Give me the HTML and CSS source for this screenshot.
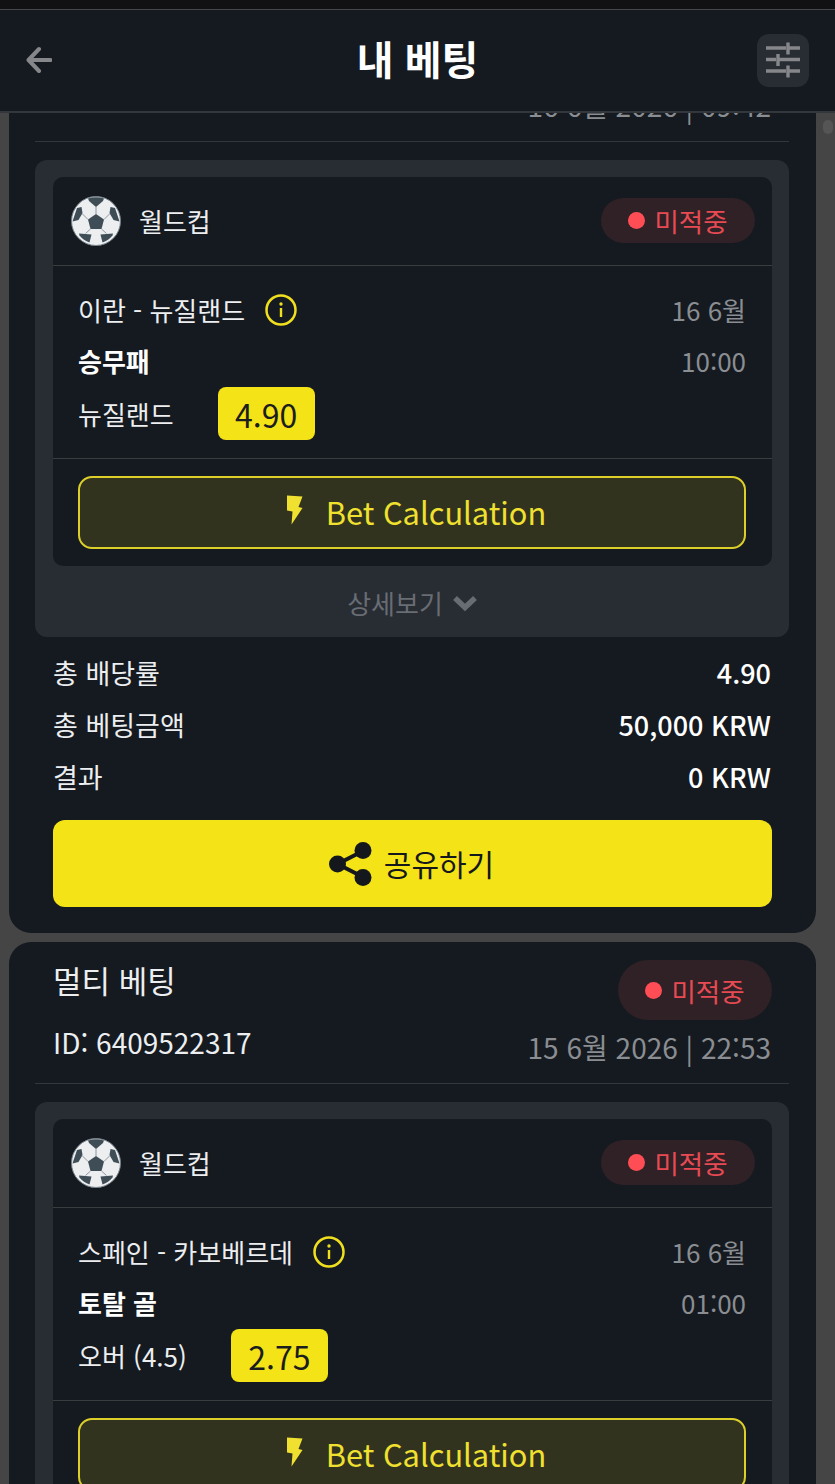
FILE: index.html
```html
<!DOCTYPE html>
<html lang="ko">
<head>
    <meta charset="UTF-8">
    <meta name="viewport" content="width=device-width, initial-scale=1.0">
    <title>내 베팅</title>
    <link rel="stylesheet" href="styles.css">
</head>
<body>
    <svg class="svg-defs" width="0" height="0" aria-hidden="true">
        <symbol id="ball" viewBox="0 0 50 50">
            <circle cx="25" cy="25" r="24.5" fill="#eceef0" stroke="#77828a" stroke-width="1"/>
            <g fill="#3f4d57">
                <path d="M25 18l8 5.500-2.500 9.500h-11l-2.500-9.500z"/>
                <path d="M17 2.500q8-2.500 16 0l-1 2.500-7 6-7-6z"/>
                <path d="M6 12l-4.500 13.500 6-1.500 4-7-1-6z"/>
                <path d="M44 12l4.500 13.500-6-1.500-4-7 1-6z"/>
                <path d="M8 37.500l12.500 1 -2 8q-6-2-10-7z"/>
                <path d="M42 37.500l-12.500 1 2 8q6-2 10-7z"/>
            </g>
            <g stroke="#77828a" stroke-width="0.8" fill="none">
                <path d="M25 18v-7M33 23.500l6-6M17 23.500l-6-6M19.500 33l-5 4.500M30.500 33l5 4.500"/>
            </g>
        </symbol>
        <symbol id="bolt" viewBox="0 0 17 30">
            <path d="M1 0.500l15.500 1-4 10.500 4 1-11 16.500 1-13-5.500-1z" fill="currentColor"/>
        </symbol>
        <symbol id="info" viewBox="0 0 32 32">
            <circle cx="16" cy="16" r="14.500" fill="none" stroke="currentColor" stroke-width="2.500"/>
            <circle cx="16" cy="10" r="1.700" fill="currentColor"/>
            <path d="M16 14v9" stroke="currentColor" stroke-width="2.400"/>
        </symbol>
        <symbol id="chevron" viewBox="0 0 26 16">
            <path d="M3 3l10 9.500 10-9.500" fill="none" stroke="currentColor" stroke-width="5.500"/>
        </symbol>
    </svg>

    <header class="topbar">
        <button class="back-btn" type="button" aria-label="뒤로">
            <svg width="26" height="28" viewBox="0 0 26 28"><path d="M13 3L2.500 14 13 25M3 14H24.500" fill="none" stroke="currentColor" stroke-width="4" stroke-linecap="round" stroke-linejoin="round"/></svg>
        </button>
        <h1>내 베팅</h1>
        <button class="filter-btn" type="button" aria-label="필터">
            <svg width="34" height="36" viewBox="0 0 34 36">
                <path d="M0 6h20M23 6h11M22 0.500v12M0 17.500h10M13 17.500h21M12 12v12M0 29h20M23 29h11M22 23.500v12" fill="none" stroke="currentColor" stroke-width="3.400"/>
            </svg>
        </button>
    </header>
    <div class="scroll-thumb"></div>

    <main class="feed">
        <article class="card">
            <div class="card-head card-head-scrolled">
                <div class="head-row head-row-end">
                    <span class="date">16 6월 2026 | 09:42</span>
                </div>
            </div>
            <section class="panel">
                <div class="match">
                    <div class="match-head">
                        <div class="league">
                            <svg class="ball"><use href="#ball"/></svg>
                            <span>월드컵</span>
                        </div>
                        <span class="badge"><i class="dot"></i>미적중</span>
                    </div>
                    <div class="match-body">
                        <div class="match-row">
                            <div class="teams">이란 - 뉴질랜드 <svg class="info"><use href="#info"/></svg></div>
                            <span class="muted">16 6월</span>
                        </div>
                        <div class="match-row">
                            <strong class="market">승무패</strong>
                            <span class="muted kick">10:00</span>
                        </div>
                        <div class="match-row">
                            <div class="pick">뉴질랜드 <span class="odds">4.90</span></div>
                        </div>
                    </div>
                    <div class="match-foot">
                        <button class="calc-btn" type="button"><svg class="bolt"><use href="#bolt"/></svg>Bet Calculation</button>
                    </div>
                </div>
                <div class="more">상세보기 <svg class="chevron"><use href="#chevron"/></svg></div>
            </section>
            <dl class="totals">
                <div class="total-row"><dt>총 배당률</dt><dd>4.90</dd></div>
                <div class="total-row"><dt>총 베팅금액</dt><dd>50,000 KRW</dd></div>
                <div class="total-row"><dt>결과</dt><dd>0 KRW</dd></div>
            </dl>
            <button class="share-btn" type="button">
                <svg class="share-icon" width="44" height="44" viewBox="0 0 44 44">
                    <path d="M34 9L8.500 22 34 35" fill="none" stroke="currentColor" stroke-width="4"/>
                    <circle cx="34" cy="8.500" r="8.500" fill="currentColor"/>
                    <circle cx="8.500" cy="22" r="8.500" fill="currentColor"/>
                    <circle cx="34" cy="35.500" r="8.500" fill="currentColor"/>
                </svg>
                공유하기
            </button>
        </article>

        <article class="card">
            <div class="card-head">
                <div class="head-row">
                    <h2>멀티 베팅</h2>
                    <span class="badge badge-lg"><i class="dot"></i>미적중</span>
                </div>
                <div class="head-row">
                    <span class="bet-id">ID: 6409522317</span>
                    <span class="date">15 6월 2026 | 22:53</span>
                </div>
            </div>
            <section class="panel">
                <div class="match">
                    <div class="match-head">
                        <div class="league">
                            <svg class="ball"><use href="#ball"/></svg>
                            <span>월드컵</span>
                        </div>
                        <span class="badge"><i class="dot"></i>미적중</span>
                    </div>
                    <div class="match-body">
                        <div class="match-row">
                            <div class="teams">스페인 - 카보베르데 <svg class="info"><use href="#info"/></svg></div>
                            <span class="muted">16 6월</span>
                        </div>
                        <div class="match-row">
                            <strong class="market">토탈 골</strong>
                            <span class="muted kick">01:00</span>
                        </div>
                        <div class="match-row">
                            <div class="pick">오버 (4.5) <span class="odds">2.75</span></div>
                        </div>
                    </div>
                    <div class="match-foot">
                        <button class="calc-btn" type="button"><svg class="bolt"><use href="#bolt"/></svg>Bet Calculation</button>
                    </div>
                </div>
            </section>
        </article>
    </main>
</body>
</html>
```

FILE: styles.css
```css
* {
    box-sizing: border-box;
}
body {
    margin: 0;
    height: 1484px;
    overflow: hidden;
    position: relative;
    background-color: #454545;
    color: #eceef0;
    font-family: "Noto Sans CJK KR", "Noto Sans", sans-serif;
    font-size: 26px;
}
button {
    font-family: inherit;
    cursor: pointer;
}
.svg-defs {
    position: absolute;
}

/* header sits over the scrolled list */
.topbar {
    position: absolute;
    top: 0;
    left: 0;
    right: 0;
    z-index: 2;
    height: 113px;
    display: grid;
    grid-template-columns: 1fr auto 1fr;
    align-items: center;
    padding: 0 26px;
    background-color: #151a20;
    border-top: 9px solid #111114;
    border-bottom: 2px solid #33373c;
    box-shadow: inset 0 1px 0 #44474c;
    background-clip: padding-box;
}
.topbar h1 {
    margin: 0 0 4px 0;
    font-size: 40px;
    font-weight: 700;
    color: #fff;
}
.back-btn {
    width: 26px;
    height: 28px;
    padding: 0;
    border: none;
    background: none;
    color: #85878a;
}
.filter-btn {
    justify-self: end;
    width: 52px;
    height: 53px;
    padding: 0;
    display: flex;
    align-items: center;
    justify-content: center;
    border: none;
    border-radius: 12px;
    background-color: #282c33;
    color: #85878a;
}
.scroll-thumb {
    position: absolute;
    top: 120px;
    left: 823px;
    width: 10px;
    height: 14px;
    border-radius: 5px;
    background-color: #555;
}

.feed {
    display: flex;
    flex-direction: column;
    gap: 9px;
    padding: 0 19px 0 9px;
}
.card {
    flex-shrink: 0;
    padding: 0 27px 26px 26px;
    background-color: #151a20;
    border-radius: 0 0 22px 22px;
}
.card + .card {
    border-radius: 22px 22px 0 0;
}
.card-head {
    padding: 18px 0 0 18px;
    height: 142px;
    border-bottom: 1px solid #33373c;
}
.card-head-scrolled {
    padding-top: 78px;
}
.head-row {
    display: flex;
    justify-content: space-between;
    align-items: flex-start;
    padding-right: 18px;
}
.head-row-end {
    justify-content: flex-end;
}
.head-row h2 {
    margin: 0;
    font-size: 31px;
    font-weight: 400;
    line-height: 40px;
}
.bet-id {
    font-size: 28px;
    line-height: 44px;
}
.date {
    padding-top: 3px;
    line-height: 48px;
    font-size: 28px;
    color: #8a8d91;
}

.badge {
    display: inline-flex;
    align-items: center;
    justify-content: center;
    gap: 9px;
    width: 154px;
    height: 45px;
    border-radius: 23px;
    background-color: #2f2125;
    color: #e84a53;
    font-size: 26.500px;
}
.badge-lg {
    height: 60px;
    border-radius: 30px;
    margin-right: -1px;
}
.dot {
    width: 17px;
    height: 17px;
    border-radius: 50%;
    background-color: #ff4d55;
}

.panel {
    margin-top: 18px;
    padding: 17px 17px 0 18px;
    background-color: #282c33;
    border-radius: 12px;
}
.match {
    background-color: #151a20;
    border-radius: 10px;
}
.match-head {
    height: 89px;
    display: flex;
    align-items: center;
    justify-content: space-between;
    padding: 0 17px 1px 18px;
    border-bottom: 1px solid #3a3d40;
}
.league {
    display: flex;
    align-items: center;
    gap: 18px;
}
.ball {
    width: 50px;
    height: 50px;
}
.match-body {
    padding: 19px 26px 18.500px 25px;
}
.match-row {
    height: 51.500px;
    display: flex;
    align-items: center;
    justify-content: space-between;
}
.teams {
    display: flex;
    align-items: center;
    gap: 20px;
    margin-bottom: 2px;
}
.info {
    width: 32px;
    height: 32px;
    color: #f0df1e;
}
.market {
    font-weight: 700;
    color: #fff;
    margin-bottom: 4px;
}
.muted {
    color: #8a8d91;
    margin-bottom: 2px;
}
.kick {
    margin-bottom: 4px;
}
.pick {
    display: flex;
    align-items: center;
    gap: 44px;
}
.odds {
    width: 97px;
    height: 53px;
    display: flex;
    align-items: center;
    justify-content: center;
    border-radius: 8px;
    background-color: #f4e316;
    color: #1b1d1f;
    font-size: 32px;
}
.match-foot {
    padding: 17px 26px 17px 25px;
    border-top: 1px solid #3a3d40;
}
.calc-btn {
    width: 100%;
    height: 73px;
    display: flex;
    align-items: center;
    justify-content: center;
    gap: 23px;
    padding: 0 0 2px 8px;
    border: 2px solid #dccf2a;
    border-radius: 14px;
    background-color: #31331f;
    color: #f0e030;
    font-size: 30.800px;
}
.bolt {
    width: 17px;
    height: 30px;
    margin-bottom: 4px;
}
.more {
    height: 71px;
    display: flex;
    align-items: center;
    justify-content: center;
    gap: 9px;
    padding-top: 2px;
    color: #686c73;
}
.chevron {
    width: 26px;
    height: 16px;
}

.totals {
    margin: 9px 0 18px 18px;
    padding-right: 18px;
    font-size: 27px;
}
.total-row {
    height: 52px;
    display: flex;
    align-items: center;
    justify-content: space-between;
}
.total-row dd {
    margin: 0;
    font-weight: 500;
    color: #fff;
}
.share-btn {
    width: 719px;
    height: 87px;
    margin-left: 18px;
    display: flex;
    align-items: center;
    justify-content: center;
    gap: 11px;
    padding: 0 2px 2px 0;
    border: none;
    border-radius: 12px;
    background-color: #f4e316;
    color: #14181d;
    font-size: 30px;
}
.share-icon {
    margin-top: 2px;
}
```
